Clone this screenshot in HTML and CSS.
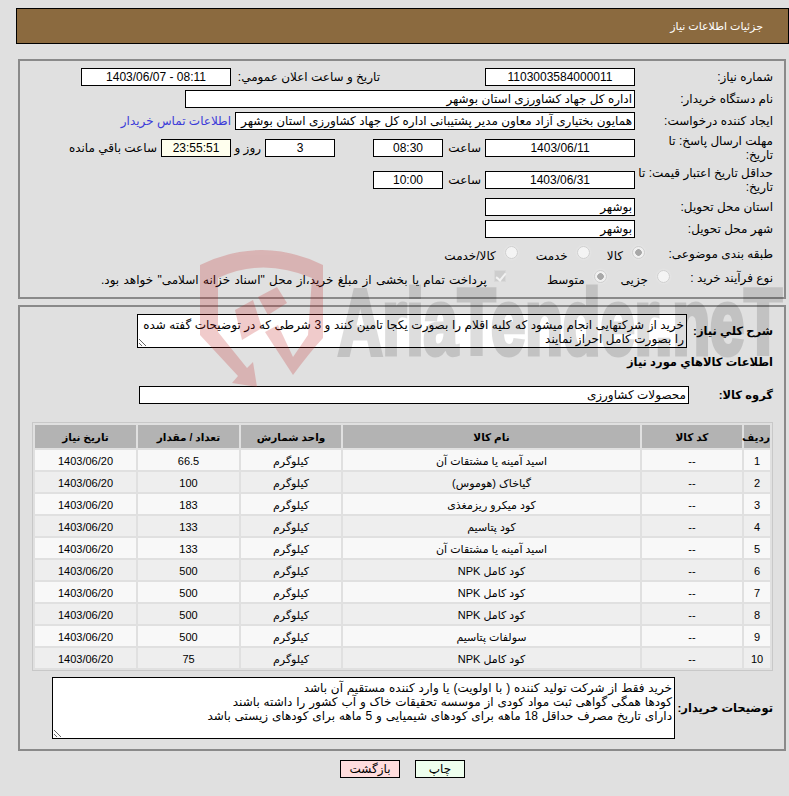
FILE: index.html
```html
<!DOCTYPE html>
<html lang="fa" dir="rtl">
<head>
<meta charset="utf-8">
<title>جزئیات اطلاعات نیاز</title>
<link rel="stylesheet" href="styles.css">
</head>
<body>
<div class="page">
  <header class="title-bar">جزئیات اطلاعات نیاز</header>

  <section class="panel panel-info">
    <div class="row r18">
      <div class="label">شماره نیاز:</div>
      <div class="field w150 center">1103003584000011</div>
      <div class="public-label">تاریخ و ساعت اعلان عمومي:</div>
      <div class="field w150 center" dir="ltr">1403/06/07 - 08:11</div>
    </div>
    <div class="row r18 mt4">
      <div class="label">نام دستگاه خریدار:</div>
      <div class="field w450">اداره کل جهاد کشاورزی استان بوشهر</div>
    </div>
    <div class="row r18 mt4">
      <div class="label">ایجاد کننده درخواست:</div>
      <div class="field w400">همایون بختیاری آزاد معاون مدیر پشتیبانی اداره کل جهاد کشاورزی استان بوشهر</div>
      <a class="link" href="#">اطلاعات تماس خریدار</a>
    </div>
    <div class="row r18 mt9">
      <div class="label two">مهلت ارسال پاسخ: تا<br>تاریخ:</div>
      <div class="field w150 center">1403/06/11</div>
      <div class="word w-hour">ساعت</div>
      <div class="field w70 center">08:30</div>
      <div class="word w-gap"></div>
      <div class="field w70 center">3</div>
      <div class="word w-day">روز و</div>
      <div class="field w70 timer center">23:55:51</div>
      <div class="word w-left">ساعت باقي مانده</div>
    </div>
    <div class="row r18 mt14">
      <div class="label two">حداقل تاریخ اعتبار قیمت: تا<br>تاریخ:</div>
      <div class="field w150 center">1403/06/31</div>
      <div class="word w-hour">ساعت</div>
      <div class="field w70 center">10:00</div>
    </div>
    <div class="row r18 mt9">
      <div class="label">استان محل تحویل:</div>
      <div class="field w150">بوشهر</div>
    </div>
    <div class="row r18 mt4">
      <div class="label">شهر محل تحویل:</div>
      <div class="field w150">بوشهر</div>
    </div>
    <div class="row r16 mt8">
      <div class="label">طبقه بندی موضوعی:</div>
      <label class="opt o1"><input class="radio" type="radio" name="a" disabled checked><span>کالا</span></label>
      <label class="opt o2"><input class="radio" type="radio" name="a" disabled><span>خدمت</span></label>
      <label class="opt o3"><input class="radio" type="radio" name="a" disabled><span>کالا/خدمت</span></label>
    </div>
    <div class="row r16 mt8">
      <div class="label">نوع فرآیند خرید :</div>
      <label class="opt o4"><input class="radio" type="radio" name="b" disabled><span>جزیی</span></label>
      <label class="opt o5"><input class="radio" type="radio" name="b" disabled checked><span>متوسط</span></label>
      <label class="opt o6"><input class="check" type="checkbox" disabled checked><span class="pay">پرداخت تمام یا بخشی از مبلغ خرید،از محل "اسناد خزانه اسلامی" خواهد بود.</span></label>
    </div>
  </section>

  <section class="panel panel-items">
    <div class="row r34">
      <div class="label bold w86">شرح کلي نیاز:</div>
      <textarea class="area a1" readonly>خرید از شرکتهایی انجام میشود که کلیه اقلام را بصورت یکجا تامین کنند و 3 شرطی که در توضیحات گفته شده را بصورت کامل احراز نمایند</textarea>
    </div>
    <div class="section-title bold">اطلاعات کالاهاي مورد نياز</div>
    <div class="row r18 group">
      <div class="label bold w84">گروه کالا:</div>
      <div class="field w550">محصولات کشاورزی</div>
    </div>
    <table class="items">
      <colgroup><col class="c1"><col class="c2"><col class="c3"><col class="c4"><col class="c5"><col class="c6"></colgroup>
      <thead>
        <tr><th>ردیف</th><th>کد کالا</th><th>نام کالا</th><th>واحد شمارش</th><th>تعداد / مقدار</th><th>تاریخ نیاز</th></tr>
      </thead>
      <tbody>
        <tr><td>1</td><td>--</td><td>اسید آمینه یا مشتقات آن</td><td>کیلوگرم</td><td>66.5</td><td>1403/06/20</td></tr>
        <tr><td>2</td><td>--</td><td>گیاخاک (هوموس)</td><td>کیلوگرم</td><td>100</td><td>1403/06/20</td></tr>
        <tr><td>3</td><td>--</td><td>کود میکرو ریزمغذی</td><td>کیلوگرم</td><td>183</td><td>1403/06/20</td></tr>
        <tr><td>4</td><td>--</td><td>کود پتاسیم</td><td>کیلوگرم</td><td>133</td><td>1403/06/20</td></tr>
        <tr><td>5</td><td>--</td><td>اسید آمینه یا مشتقات آن</td><td>کیلوگرم</td><td>133</td><td>1403/06/20</td></tr>
        <tr><td>6</td><td>--</td><td>کود کامل NPK</td><td>کیلوگرم</td><td>500</td><td>1403/06/20</td></tr>
        <tr><td>7</td><td>--</td><td>کود کامل NPK</td><td>کیلوگرم</td><td>500</td><td>1403/06/20</td></tr>
        <tr><td>8</td><td>--</td><td>کود کامل NPK</td><td>کیلوگرم</td><td>500</td><td>1403/06/20</td></tr>
        <tr><td>9</td><td>--</td><td>سولفات پتاسیم</td><td>کیلوگرم</td><td>500</td><td>1403/06/20</td></tr>
        <tr><td>10</td><td>--</td><td>کود کامل NPK</td><td>کیلوگرم</td><td>75</td><td>1403/06/20</td></tr>
      </tbody>
    </table>
    <div class="row r62 buyer">
      <div class="label bold w98">توضیحات خریدار:</div>
      <textarea class="area a2" readonly>خرید فقط از شرکت تولید کننده ( با اولویت) یا وارد کننده مستقیم آن باشد
کودها همگی گواهی ثبت مواد کودی از موسسه تحقیقات خاک و آب کشور را داشته باشند
دارای تاریخ مصرف حداقل 18 ماهه برای کودهای شیمیایی و 5 ماهه برای کودهای زیستی باشد</textarea>
    </div>
  </section>

  <div class="actions">
    <button class="btn print" type="button">چاپ</button>
    <button class="btn back" type="button">بازگشت</button>
  </div>
</div>

<svg class="watermark" width="789" height="796" viewBox="0 0 789 796" aria-hidden="true">
  <g class="wm-shield">
    <path fill-rule="evenodd" d="M200 265Q262 235 323 265L323 338Q310 352 293 375L265 332L278 325L293 357L308 335L312 278Q262 257 218 278L218 332L247 368L253 362L257 387L232 383L238 376L200 335Z"/>
    <path d="M258 297L277 287L287 303L268 315Z"/>
    <path d="M235 310L253 300L262 328L242 340Z"/>
  </g>
  <text class="wm-text" dir="ltr" x="338" y="354" textLength="444" lengthAdjust="spacingAndGlyphs">AriaTender.neT</text>
</svg>
</body>
</html>
```

FILE: styles.css
```css
* { box-sizing: border-box; }
html, body { margin: 0; padding: 0; }
body {
  background: #e0e0e0;
  color: #000;
  font-family: "Liberation Sans", "DejaVu Sans", sans-serif;
  font-size: 12px;
  line-height: 14px;
  position: relative;
  height: 796px;
  overflow: hidden;
}
.page { padding: 8px 0 0; direction: rtl; }
.title-bar {
  margin: 0 0 15px 16px;
  height: 36px;
  background: #8b6a3f;
  border: 1px solid #000;
  color: #fff;
  padding: 0 25px 0 0;
  line-height: 34px;
  font-size: 11px;
}
.panel {
  margin: 0 3px 0 18px;
  border: 2px solid #8a8a8a;
  padding: 7px 11px 0 0;
}
.panel-info { height: 240px; margin-bottom: 6px; }
.panel-items { height: 446px; }

.row { display: flex; align-items: center; }
.r16 { height: 16px; }
.r18 { height: 18px; }
.r34 { height: 34px; }
.r62 { height: 62px; }
.mt4 { margin-top: 4px; }
.mt8 { margin-top: 8px; }
.mt9 { margin-top: 9px; }
.mt14 { margin-top: 14px; }

.label { width: 138px; flex: none; white-space: nowrap; }
.bold { font-weight: bold; font-size: 11.5px; }
.w84 { width: 84px; }
.w86 { width: 86px; }
.w98 { width: 98px; }

.field {
  height: 18px;
  flex: none;
  background: #fff;
  border: 1px solid #000;
  padding: 0 2px;
  line-height: 16px;
  white-space: nowrap;
  overflow: hidden;
}
.center { text-align: center; }
.w70 { width: 70px; }
.w150 { width: 150px; }
.w400 { width: 400px; }
.w450 { width: 450px; }
.w550 { width: 550px; }
.timer { background: #ffffee; }

.public-label { width: 254px; padding-right: 105px; white-space: nowrap; flex: none; }
.link { color: #3b3bd9; text-decoration: none; margin-right: 4px; white-space: nowrap; }
.word { flex: none; white-space: nowrap; }
.w-hour { width: 42px; padding-right: 4px; }
.w-gap { width: 38px; }
.w-day { width: 34px; padding-right: 4px; }
.w-left { padding-right: 4px; }

.opt { display: flex; align-items: flex-start; white-space: nowrap; flex: none; height: 16px; }
.o1 { margin-right: -10px; }
.o2 { margin-right: 17px; }
.o3 { margin-right: 18px; }
.o4 { margin-right: -35px; }
.o5 { margin-right: 14px; }
.o6 { margin-right: 41px; }
.opt span { margin: 3px 9px 0 0; }
.opt .pay { margin-right: 7px; word-spacing: 1px; }

.radio, .check {
  appearance: none;
  margin: 0;
  flex: none;
  position: relative;
}
.radio {
  width: 13px;
  height: 13px;
  border-radius: 50%;
  background: #f4f4f4;
  border: 1px solid #cfcfcf;
  box-shadow: 0 0 2px #f0f0f0;
}
.radio:checked { background: radial-gradient(circle, #a8a8a8 0 3px, #f0f0f0 3.6px); }
.check {
  width: 12px;
  height: 12px;
  background: #cdcdcd;
  border: 1px solid #d8d8d8;
}
.check:checked::after {
  content: "";
  position: absolute;
  left: 3px;
  top: 0;
  width: 4px;
  height: 8px;
  border: solid #f2f2f2;
  border-width: 0 2px 2px 0;
  transform: rotate(40deg);
}

.area {
  display: block;
  flex: none;
  background: #fff;
  border: 1px solid #000;
  border-radius: 0;
  padding: 3px 2px 1px;
  margin: 0;
  color: #000;
  font: inherit;
  line-height: 14px;
  overflow: hidden;
  outline: none;
  direction: rtl;
}
.a1 { width: 550px; height: 34px; word-spacing: 0.2px; }
.a2 { width: 623px; height: 62px; word-spacing: 0.5px; }

.section-title { margin-top: 7px; height: 14px; line-height: 14px; white-space: nowrap; }
.group { margin-top: 17px; }

.items {
  margin: 18px 0 0;
  width: 741px;
  table-layout: fixed;
  border: 1px solid #c8c8c8;
  border-spacing: 2px;
  border-collapse: separate;
}
.c1 { width: 26px; }
.c2 { width: 100px; }
.c3 { width: 297px; }
.c4 { width: 100px; }
.c5 { width: 101px; }
.c6 { width: 101px; }
.items th {
  height: 23px;
  padding: 0;
  background: #b3b3b3;
  font-weight: bold;
  font-size: 10.5px;
  text-align: center;
  white-space: nowrap;
}
.items td {
  height: 20px;
  padding: 1px 0 0;
  background: #f8f8f8;
  text-align: center;
  font-size: 11px;
}
.items tbody tr:nth-child(even) td { background: #eeeeee; }
.buyer { margin-top: 6px; }

.actions {
  display: flex;
  gap: 15px;
  padding: 9px 324px 0 0;
}
.btn {
  height: 18px;
  padding: 0;
  border: 1px solid #000;
  border-radius: 0;
  color: #000;
  font: inherit;
  line-height: 14px;
}
.print { width: 50px; background: #eeffee; }
.back { width: 60px; background: #ffdddd; }

.watermark {
  position: absolute;
  left: 0;
  top: 0;
  pointer-events: none;
}
.wm-shield { fill: #c01818; opacity: 0.22; }
.wm-text {
  font-family: "Liberation Sans", sans-serif;
  font-weight: bold;
  font-size: 92px;
  fill: #000;
  stroke: #000;
  stroke-width: 5px;
  opacity: 0.13;
  direction: ltr;
}
```
